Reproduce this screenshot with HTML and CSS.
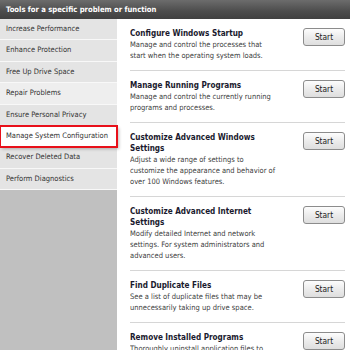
FILE: index.html
```html
<!DOCTYPE html>
<html lang="en">
<head>
    <meta charset="UTF-8">
    <title>Tools for a specific problem or function</title>
    <link rel="stylesheet" href="styles.css">
</head>
<body>
    <div class="window">
        <div class="header">Tools for a specific problem or function</div>
        <div class="main">
            <div class="sidebar">
                <div class="nav-item">Increase Performance</div>
                <div class="nav-item">Enhance Protection</div>
                <div class="nav-item">Free Up Drive Space</div>
                <div class="nav-item hover">Repair Problems</div>
                <div class="nav-item">Ensure Personal Privacy</div>
                <div class="nav-item active">Manage System Configuration</div>
                <div class="nav-item">Recover Deleted Data</div>
                <div class="nav-item">Perform Diagnostics</div>
            </div>

            <div class="content">
                <div class="tool">
                    <div class="tool-text">
                        <div class="tool-title">Configure Windows Startup</div>
                        <div class="tool-desc">Manage and control the processes that<br>start when the operating system loads.</div>
                    </div>
                    <button class="start-btn">Start</button>
                </div>
                <div class="tool">
                    <div class="tool-text">
                        <div class="tool-title">Manage Running Programs</div>
                        <div class="tool-desc">Manage and control the currently running<br>programs and processes.</div>
                    </div>
                    <button class="start-btn">Start</button>
                </div>
                <div class="tool">
                    <div class="tool-text">
                        <div class="tool-title">Customize Advanced Windows<br>Settings</div>
                        <div class="tool-desc">Adjust a wide range of settings to<br>customize the appearance and behavior of<br>over 100 Windows features.</div>
                    </div>
                    <button class="start-btn">Start</button>
                </div>
                <div class="tool">
                    <div class="tool-text">
                        <div class="tool-title">Customize Advanced Internet<br>Settings</div>
                        <div class="tool-desc">Modify detailed Internet and network<br>settings. For system administrators and<br>advanced users.</div>
                    </div>
                    <button class="start-btn">Start</button>
                </div>
                <div class="tool">
                    <div class="tool-text">
                        <div class="tool-title">Find Duplicate Files</div>
                        <div class="tool-desc">See a list of duplicate files that may be<br>unnecessarily taking up drive space.</div>
                    </div>
                    <button class="start-btn">Start</button>
                </div>
                <div class="tool">
                    <div class="tool-text">
                        <div class="tool-title">Remove Installed Programs</div>
                        <div class="tool-desc">Thoroughly uninstall application files to<br>free up space and keep your system clean.</div>
                    </div>
                    <button class="start-btn">Start</button>
                </div>
            </div>
        </div>
    </div>
</body>
</html>
```

FILE: styles.css
```css
* { margin: 0; padding: 0; box-sizing: border-box; }
:root {
    --sidebar-bg: #c0c0c0; --item-bg: #e4e4e4; --item-line: #f8f8f8;
    --title: #1a1a2e; --text: #404040; --rule: #d6d6d6;
}
body {
    font-family: "DejaVu Sans Condensed", "Liberation Sans", sans-serif;
    font-size: 7.5px; color: var(--text);
    background: #fff; overflow: hidden;
}
.window { width: 350px; height: 350px; display: flex; flex-direction: column; }
.header {
    height: 19px; flex-shrink: 0; padding-left: 6px;
    background: linear-gradient(#6c6c6c, #4c4c4c 60%, #404040);
    color: #fff; font-weight: bold; font-size: 7.6px; line-height: 19px;
}
.main { flex: 1; display: flex; min-height: 0; }
.sidebar { width: 117px; flex-shrink: 0; background: var(--sidebar-bg); }
.nav-item {
    height: 21.4px; line-height: 20.4px; padding-left: 6px;
    background: var(--item-bg); border-bottom: 1px solid var(--item-line);
    color: #333; white-space: nowrap;
}
.nav-item.hover { background: #eeeeee; }
.nav-item.active {
    background: #fff; position: relative;
    outline: 2px solid #e8101a; outline-offset: -1px;
    box-shadow: 2px 2px 3px rgba(0, 0, 0, 0.25);
}
.content { flex: 1; padding: 0 5px 0 13px; }
.tool {
    display: flex; align-items: flex-start; gap: 16px;
    padding: 9px 0; border-bottom: 1px solid var(--rule);
}
.tool-text { flex: 1; line-height: 11px; white-space: nowrap; overflow: hidden; }
.tool-title { color: var(--title); font-weight: bold; font-size: 8.1px; }
.tool-desc { color: var(--text); }
.start-btn {
    width: 42px; height: 18px; flex-shrink: 0;
    background: linear-gradient(#fdfdfd, #ececec 50%, #dedede);
    border: 1px solid #8c8c8c; border-radius: 3px;
    font-family: inherit; font-size: 8.3px; color: #222;
}
```
